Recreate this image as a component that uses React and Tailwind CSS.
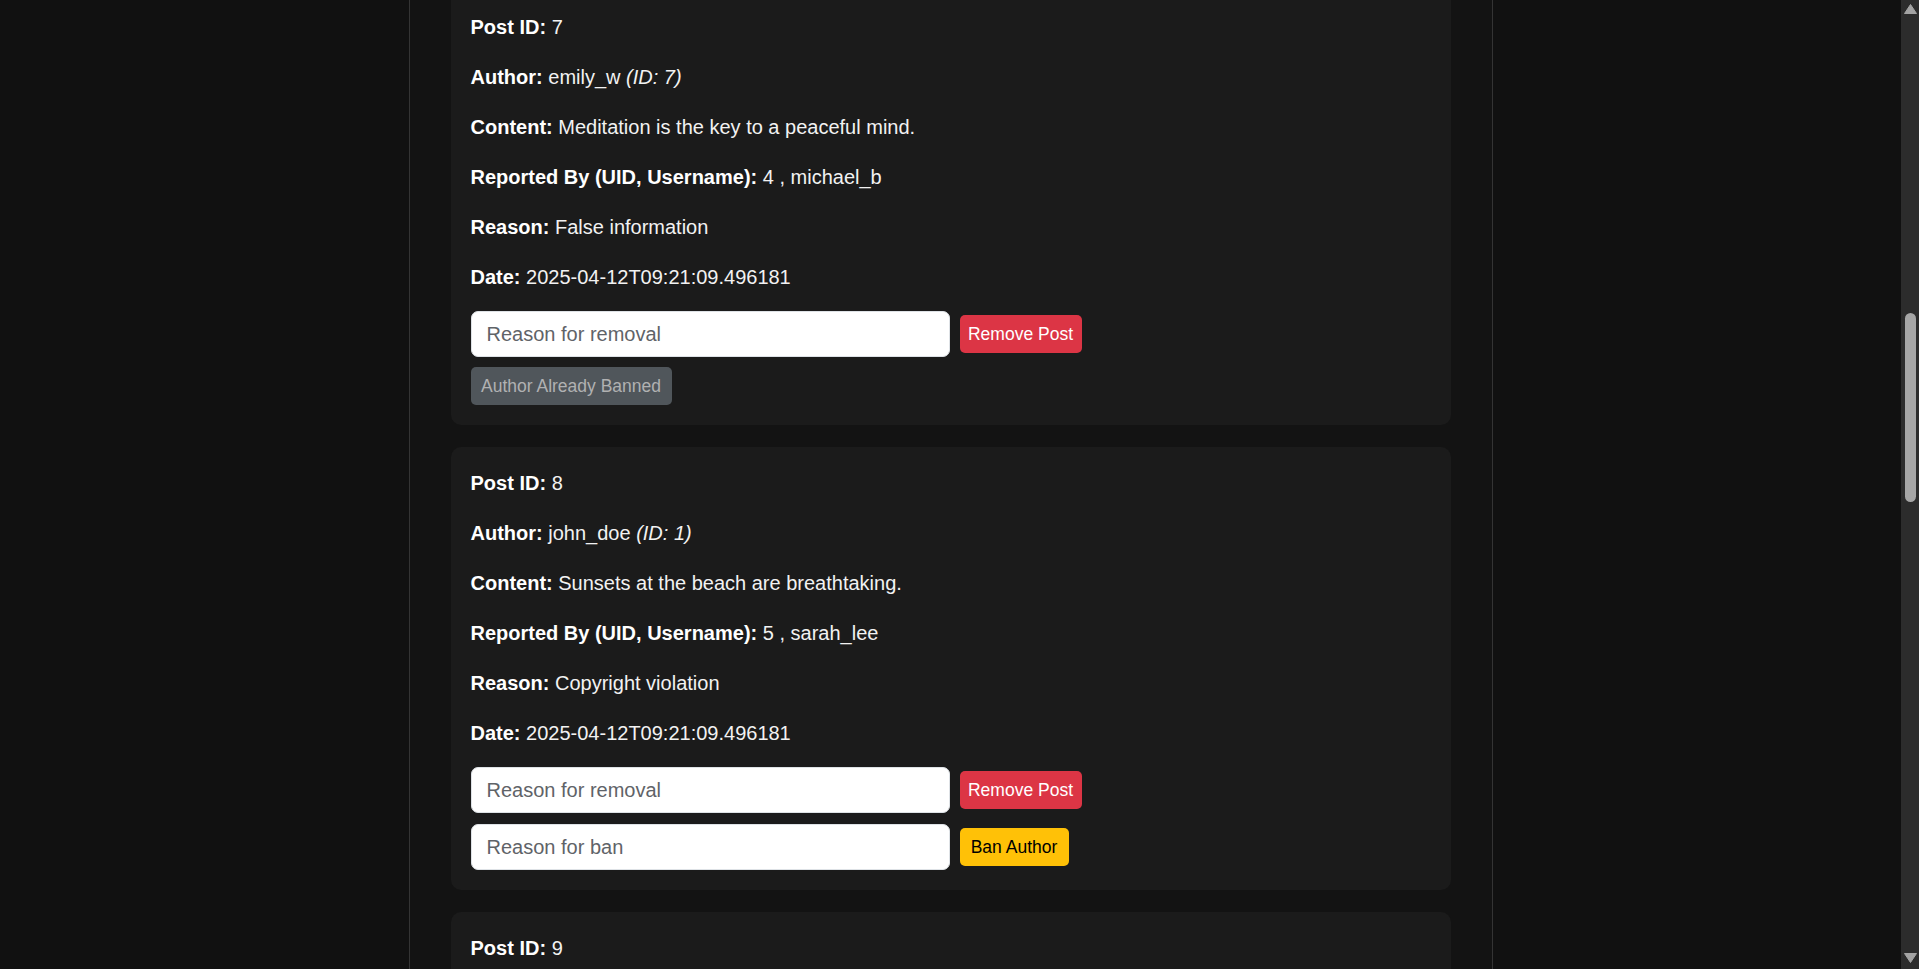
import React from "react";

const posts = [
  {
    id: 7,
    author: "emily_w",
    authorId: 7,
    content: "Meditation is the key to a peaceful mind.",
    reporterId: 4,
    reporter: "michael_b",
    reason: "False information",
    date: "2025-04-12T09:21:09.496181",
    banned: true,
  },
  {
    id: 8,
    author: "john_doe",
    authorId: 1,
    content: "Sunsets at the beach are breathtaking.",
    reporterId: 5,
    reporter: "sarah_lee",
    reason: "Copyright violation",
    date: "2025-04-12T09:21:09.496181",
    banned: false,
  },
  {
    id: 9,
    author: "sarah_lee",
    authorId: 5,
    content: "Just finished reading an amazing book!",
    reporterId: 2,
    reporter: "jane_smith",
    reason: "Spam",
    date: "2025-04-12T09:21:09.496181",
    banned: false,
  },
];

function Line({ label, children }) {
  return (
    <p className="mb-[19px] pt-[1px] leading-[30px]">
      <strong className="font-bold text-white">{label}</strong> {children}
    </p>
  );
}

function ReasonInput({ placeholder }) {
  return (
    <input
      type="text"
      placeholder={placeholder}
      className="h-[46px] w-[479px] rounded-[7px] border border-[#dee2e6] bg-white px-[15px] text-[20px] text-[#212529] outline-none placeholder:text-[#5f6368]"
    />
  );
}

function PostCard({ post }) {
  return (
    <div className="mb-[22px] rounded-[10px] bg-[#1b1b1b] p-5">
      <Line label="Post ID:">{post.id}</Line>
      <Line label="Author:">
        {post.author} <em className="italic">(ID: {post.authorId})</em>
      </Line>
      <Line label="Content:">{post.content}</Line>
      <Line label="Reported By (UID, Username):">
        {post.reporterId} , {post.reporter}
      </Line>
      <Line label="Reason:">{post.reason}</Line>
      <Line label="Date:">{post.date}</Line>
      <div className="flex items-center gap-[10px]">
        <ReasonInput placeholder="Reason for removal" />
        <button className="h-[38px] w-[122px] rounded-[5px] bg-[#dc3545] text-[17.5px] leading-[26px] text-white">
          Remove Post
        </button>
      </div>
      {post.banned ? (
        <div className="mt-[10px] flex">
          <button
            disabled
            className="h-[38px] w-[201px] rounded-[5px] bg-[#50565b] text-[17.5px] leading-[26px] text-[#b0b1b2]"
          >
            Author Already Banned
          </button>
        </div>
      ) : (
        <div className="mt-[11px] flex items-center gap-[10px]">
          <ReasonInput placeholder="Reason for ban" />
          <button className="h-[38px] w-[109px] rounded-[5px] bg-[#ffc107] text-[17.5px] leading-[26px] text-black">
            Ban Author
          </button>
        </div>
      )}
    </div>
  );
}

function Scrollbar() {
  return (
    <div className="flex h-screen w-[18px] shrink-0 flex-col bg-[#2c2c2c]">
      <div className="flex h-[17px] items-center justify-center">
        <svg width="13" height="10" viewBox="0 0 13 10">
          <path d="M6.5 0.5 L12.5 9.5 L0.5 9.5 Z" fill="#a3a3a3" stroke="#a3a3a3" strokeLinejoin="round" />
        </svg>
      </div>
      <div className="flex-1">
        <div className="mx-auto mt-[296px] h-[189px] w-[11px] rounded-full bg-[#a6a6a6]" />
      </div>
      <div className="flex h-[17px] items-start justify-center pt-[1px]">
        <svg width="13" height="10" viewBox="0 0 13 10">
          <path d="M0.5 0.5 L12.5 0.5 L6.5 9.5 Z" fill="#a3a3a3" stroke="#a3a3a3" strokeLinejoin="round" />
        </svg>
      </div>
    </div>
  );
}

export default function App() {
  return (
    <div
      className="flex h-screen w-full overflow-hidden bg-[#111111] text-[20px] text-[#f2f2f2]"
      style={{ fontFamily: '"Liberation Sans", Arial, sans-serif' }}
    >
      <main className="h-screen flex-1 overflow-hidden">
        <div className="mx-auto min-h-screen w-[1084px] border-x border-[#343434] bg-[#131313] px-[41px]">
          <div className="-mt-[9px]">
            {posts.map((p) => (
              <PostCard key={p.id} post={p} />
            ))}
          </div>
        </div>
      </main>
      <Scrollbar />
    </div>
  );
}
